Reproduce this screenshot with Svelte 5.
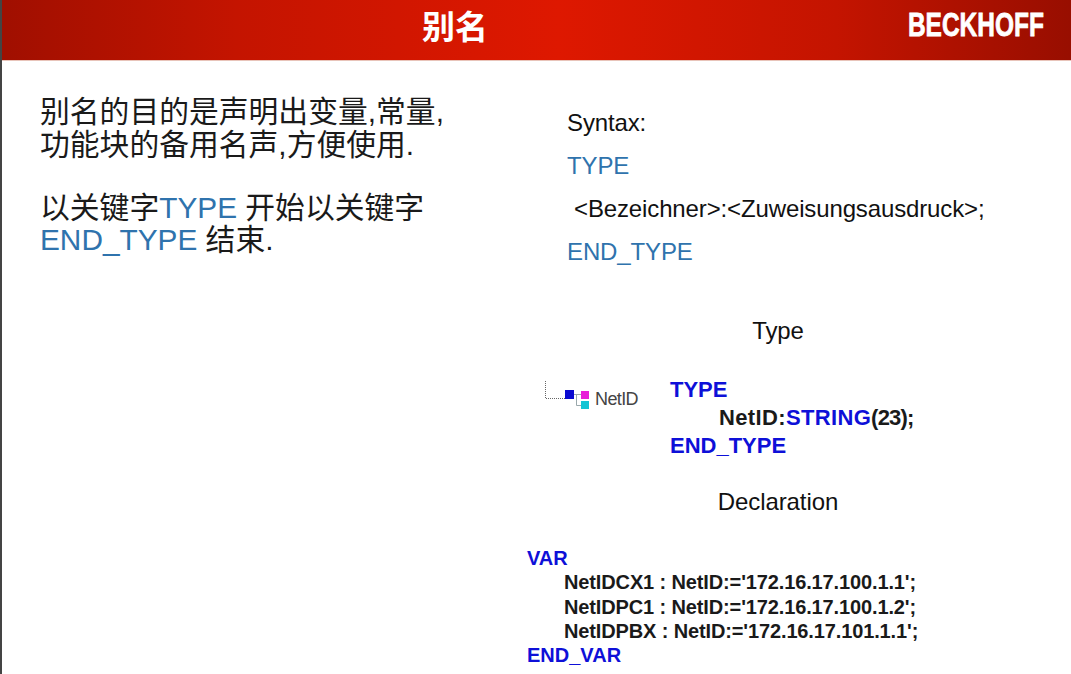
<script>
  const vars = [
    "NetIDCX1 : NetID:='172.16.17.100.1.1';",
    "NetIDPC1 : NetID:='172.16.17.100.1.2';",
    "NetIDPBX : NetID:='172.16.17.101.1.1';"
  ];
</script>

<div class="slide">
  <header class="bar">
    <h1>别名</h1>
    <span class="logo">BECKHOFF</span>
  </header>
  <main class="body">
    <section class="left">
      <p>别名的目的是声明出变量,常量,<br />功能块的备用名声,方便使用.</p>
      <p>以关键字<span class="blue">TYPE</span> 开始以关键字<br /><span class="blue">END_TYPE</span> 结束.</p>
    </section>
    <section class="right">
      <div class="syntax">
        <div>Syntax:</div>
        <div class="blue">TYPE</div>
        <div class="indent">&lt;Bezeichner&gt;:&lt;Zuweisungsausdruck&gt;;</div>
        <div class="blue">END_TYPE</div>
      </div>
      <div class="caption first">Type</div>
      <div class="typerow">
        <div class="tree">
          <svg width="50" height="30" viewBox="0 0 50 30" aria-hidden="true">
            <path d="M1.5 0v17.5H21" fill="none" stroke="#666" stroke-dasharray="1 1" />
            <path d="M30 13.5h7M32.5 13.5v11H37" fill="none" stroke="#9aa8ac" />
            <rect x="21" y="9" width="9" height="9" fill="#0a0ad0" />
            <rect x="37" y="10" width="8" height="8" fill="#e81fd8" />
            <rect x="37" y="20" width="8" height="8" fill="#14c4d4" />
          </svg>
          <span>NetID</span>
        </div>
        <div class="typecode">
          <div class="kw">TYPE</div>
          <div class="inner">NetID:<span class="kw">STRING</span><span class="tight">(23);</span></div>
          <div class="kw">END_TYPE</div>
        </div>
      </div>
      <div class="caption second">Declaration</div>
      <div class="varcode">
        <div class="kw">VAR</div>
        {#each vars as line}
          <div class="varline">{line}</div>
        {/each}
        <div class="kw">END_VAR</div>
      </div>
    </section>
  </main>
</div>

<style>
  :global(body) { margin: 0; background: #fff; }
  .slide {
    width: 1071px; height: 674px; overflow: hidden; box-sizing: border-box;
    border-left: 2px solid #444; background: #fff; color: #111;
    font-family: "Liberation Sans", "Noto Sans CJK SC", sans-serif;
  }
  .bar {
    height: 60px; display: grid; grid-template-columns: 420px auto 1fr; align-items: center;
    background: linear-gradient(90deg, #a00f00 0%, #c41400 22%, #de1800 52%, #c41400 78%, #980e00 100%);
    border-bottom: 1px solid #e8c4ba; color: #fff;
  }
  h1 {
    grid-column: 2; margin: 0 0 9px; font: 700 33px/1 "Noto Sans CJK SC", sans-serif; color: #fff;
  }
  .logo {
    justify-self: end; margin: 0 27px 12px 0; font: 700 34px/1 "Liberation Sans", sans-serif;
    transform: scaleX(0.72); transform-origin: right center; -webkit-text-stroke: 0.8px #fff;
  }
  .body { display: grid; grid-template-columns: 497px 1fr; }
  .left { padding: 35px 0 0 38px; font-size: 29.8px; line-height: 32.5px; color: #1a1a1a; }
  .left p { margin: 0 0 30.5px; white-space: nowrap; }
  .blue { color: #2f73ad; }
  .right { min-width: 0; }
  .syntax { padding: 40px 0 0 68px; font-size: 24px; line-height: 43px; white-space: nowrap; letter-spacing: -0.13px; }
  .indent { padding-left: 7px; }
  .caption { width: 558px; text-align: center; font-size: 24px; line-height: 28px; color: #111; letter-spacing: -0.1px; }
  .caption.first { margin-top: 44px; }
  .caption.second { margin-top: 28px; }
  .typerow { display: flex; margin-top: 31px; padding-left: 45px; }
  .tree { width: 126px; display: flex; align-items: flex-start; margin-top: 5px; color: #444; }
  .tree span { font-size: 18px; line-height: 20px; margin: 8px 0 0 1px; letter-spacing: -0.6px; }
  .typecode { font: 700 22px/28px "Liberation Sans", sans-serif; color: #1a1a1a; }
  .inner { padding-left: 49px; white-space: nowrap; letter-spacing: 0.35px; }
  .tight { letter-spacing: -0.8px; }
  .kw { color: #0e10d8; }
  .varcode { margin: 30px 0 0 28px; font: 700 20px/24.25px "Liberation Sans", sans-serif; color: #1a1a1a; }
  .varline { padding-left: 37px; white-space: nowrap; letter-spacing: -0.13px; }
</style>
